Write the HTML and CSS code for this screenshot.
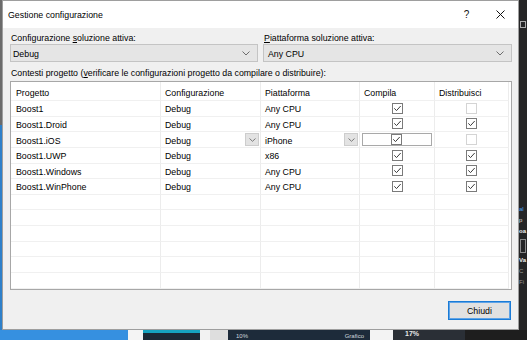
FILE: index.html
```html
<!DOCTYPE html>
<html lang="it">
<head>
<meta charset="utf-8">
<title>Gestione configurazione</title>
<link rel="stylesheet" href="styles.css">
</head>
<body>
<div class="screen">
  <div class="top">
    <div class="leftstrip"><div class="ls-grey"></div><div class="ls-blue"></div></div>
    <div class="dialog">
      <div class="titlebar">
        <span class="title">Gestione configurazione</span>
        <span class="capbtn help">?</span>
        <span class="capbtn close"><svg width="9" height="9" viewBox="0 0 9 9"><path d="M0.5 0.5 L8.5 8.5 M8.5 0.5 L0.5 8.5" stroke="#111" stroke-width="1" fill="none"/></svg></span>
      </div>
      <div class="body">
        <div class="combos">
          <div class="field">
            <div class="label">Configurazione <u>s</u>oluzione attiva:</div>
            <div class="combo"><span>Debug</span><svg class="chev" width="8" height="5" viewBox="0 0 8 5"><path d="M0.5 0.5 L4 4 L7.5 0.5" stroke="#6d6d6d" fill="none"/></svg></div>
          </div>
          <div class="field">
            <div class="label"><u>P</u>iattaforma soluzione attiva:</div>
            <div class="combo combo2"><span>Any CPU</span><svg class="chev" width="8" height="5" viewBox="0 0 8 5"><path d="M0.5 0.5 L4 4 L7.5 0.5" stroke="#6d6d6d" fill="none"/></svg></div>
          </div>
        </div>
        <div class="label label3">Contesti progetto (<u>v</u>erificare le configurazioni progetto da compilare o distribuire):</div>
        <div class="tablebox">
          <div class="grid">
            <div class="c h">Progetto</div><div class="c h">Configurazione</div><div class="c h">Piattaforma</div><div class="c h">Compila</div><div class="c h">Distribuisci</div>

            <div class="c">Boost1</div><div class="c">Debug</div><div class="c">Any CPU</div>
            <div class="c cb"><svg class="chk" width="11" height="11" viewBox="0 0 11 11"><rect x="0.5" y="0.5" width="10" height="10" fill="#fff" stroke="#7a7a7a"/><path d="M2.3 5.3 L4.5 7.6 L8.7 3" stroke="#3c3c3c" stroke-width="1" fill="none"/></svg></div>
            <div class="c cb"><svg class="chk" width="11" height="11" viewBox="0 0 11 11"><rect x="0.5" y="0.5" width="10" height="10" fill="#fff" stroke="#d4d4d4"/></svg></div>

            <div class="c">Boost1.Droid</div><div class="c">Debug</div><div class="c">Any CPU</div>
            <div class="c cb"><svg class="chk" width="11" height="11" viewBox="0 0 11 11"><rect x="0.5" y="0.5" width="10" height="10" fill="#fff" stroke="#7a7a7a"/><path d="M2.3 5.3 L4.5 7.6 L8.7 3" stroke="#3c3c3c" stroke-width="1" fill="none"/></svg></div>
            <div class="c cb"><svg class="chk" width="11" height="11" viewBox="0 0 11 11"><rect x="0.5" y="0.5" width="10" height="10" fill="#fff" stroke="#7a7a7a"/><path d="M2.3 5.3 L4.5 7.6 L8.7 3" stroke="#3c3c3c" stroke-width="1" fill="none"/></svg></div>

            <div class="c">Boost1.iOS</div>
            <div class="c sel"><span>Debug</span><span class="ddbtn"><svg width="7" height="4" viewBox="0 0 7 4"><path d="M0.5 0.5 L3.5 3.3 L6.5 0.5" stroke="#7a7a7a" fill="none"/></svg></span></div>
            <div class="c sel"><span>iPhone</span><span class="ddbtn"><svg width="7" height="4" viewBox="0 0 7 4"><path d="M0.5 0.5 L3.5 3.3 L6.5 0.5" stroke="#7a7a7a" fill="none"/></svg></span></div>
            <div class="c cb"><span class="focusbox"><svg class="chk" width="11" height="11" viewBox="0 0 11 11"><rect x="0.5" y="0.5" width="10" height="10" fill="#fff" stroke="#7a7a7a"/><path d="M2.3 5.3 L4.5 7.6 L8.7 3" stroke="#3c3c3c" stroke-width="1" fill="none"/></svg></span></div>
            <div class="c cb"><svg class="chk" width="11" height="11" viewBox="0 0 11 11"><rect x="0.5" y="0.5" width="10" height="10" fill="#fff" stroke="#d4d4d4"/></svg></div>

            <div class="c">Boost1.UWP</div><div class="c">Debug</div><div class="c">x86</div>
            <div class="c cb"><svg class="chk" width="11" height="11" viewBox="0 0 11 11"><rect x="0.5" y="0.5" width="10" height="10" fill="#fff" stroke="#7a7a7a"/><path d="M2.3 5.3 L4.5 7.6 L8.7 3" stroke="#3c3c3c" stroke-width="1" fill="none"/></svg></div>
            <div class="c cb"><svg class="chk" width="11" height="11" viewBox="0 0 11 11"><rect x="0.5" y="0.5" width="10" height="10" fill="#fff" stroke="#7a7a7a"/><path d="M2.3 5.3 L4.5 7.6 L8.7 3" stroke="#3c3c3c" stroke-width="1" fill="none"/></svg></div>

            <div class="c">Boost1.Windows</div><div class="c">Debug</div><div class="c">Any CPU</div>
            <div class="c cb"><svg class="chk" width="11" height="11" viewBox="0 0 11 11"><rect x="0.5" y="0.5" width="10" height="10" fill="#fff" stroke="#7a7a7a"/><path d="M2.3 5.3 L4.5 7.6 L8.7 3" stroke="#3c3c3c" stroke-width="1" fill="none"/></svg></div>
            <div class="c cb"><svg class="chk" width="11" height="11" viewBox="0 0 11 11"><rect x="0.5" y="0.5" width="10" height="10" fill="#fff" stroke="#7a7a7a"/><path d="M2.3 5.3 L4.5 7.6 L8.7 3" stroke="#3c3c3c" stroke-width="1" fill="none"/></svg></div>

            <div class="c">Boost1.WinPhone</div><div class="c">Debug</div><div class="c">Any CPU</div>
            <div class="c cb"><svg class="chk" width="11" height="11" viewBox="0 0 11 11"><rect x="0.5" y="0.5" width="10" height="10" fill="#fff" stroke="#7a7a7a"/><path d="M2.3 5.3 L4.5 7.6 L8.7 3" stroke="#3c3c3c" stroke-width="1" fill="none"/></svg></div>
            <div class="c cb"><svg class="chk" width="11" height="11" viewBox="0 0 11 11"><rect x="0.5" y="0.5" width="10" height="10" fill="#fff" stroke="#7a7a7a"/><path d="M2.3 5.3 L4.5 7.6 L8.7 3" stroke="#3c3c3c" stroke-width="1" fill="none"/></svg></div>

            <div class="c"></div><div class="c"></div><div class="c"></div><div class="c"></div><div class="c"></div>
            <div class="c"></div><div class="c"></div><div class="c"></div><div class="c"></div><div class="c"></div>
            <div class="c"></div><div class="c"></div><div class="c"></div><div class="c"></div><div class="c"></div>
            <div class="c"></div><div class="c"></div><div class="c"></div><div class="c"></div><div class="c"></div>
            <div class="c"></div><div class="c"></div><div class="c"></div><div class="c"></div><div class="c"></div>
            <div class="c"></div><div class="c"></div><div class="c"></div><div class="c"></div><div class="c"></div>
          </div>
        </div>
        <div class="footer">
          <button class="btn" type="button">Chiudi</button>
        </div>
      </div>
    </div>
    <div class="rightstrip">
      <div class="rs-icon"></div>
      <div class="rs-t blue">al</div>
      <div class="rs-t">p</div>
      <div class="rs-t bold">oa</div>
      <div class="rs-box"></div>
      <div class="rs-t bold">Va</div>
      <div class="rs-t grey">C</div>
      <div class="rs-t grey">Fi</div>
    </div>
  </div>
  <div class="bottom">
    <div class="seg s1"></div>
    <div class="seg s2"></div>
    <div class="seg s3"></div>
    <div class="seg s4"></div>
    <div class="seg s5"></div>
    <div class="seg s6"><span>10%</span><span>Grafico</span></div>
    <div class="seg s7"></div>
    <div class="seg s8"><span>17%</span></div>
    <div class="seg s9"></div>
  </div>
</div>
</body>
</html>
```

FILE: styles.css
```css
* { box-sizing: border-box; }
html, body { margin: 0; padding: 0; }
body {
  width: 527px;
  height: 340px;
  overflow: hidden;
  background: #1e1e1e;
  font-family: "Liberation Sans", Arial, sans-serif;
  font-size: 8.8px;
  color: #000;
}
.screen { display: flex; flex-direction: column; width: 527px; height: 340px; }
.top { display: flex; height: 330px; }
.leftstrip { width: 2px; display: flex; flex-direction: column; }
.ls-grey { height: 125px; background: #6b6b6b; }
.ls-blue { flex: 1; background: #2f80c9; }

.dialog {
  width: 517px;
  height: 330px;
  border: 1px solid #9e9e9e;
  background: #f0f0f0;
  display: flex;
  flex-direction: column;
}
.titlebar {
  height: 27px;
  background: #fff;
  display: flex;
  align-items: center;
  padding-left: 5px;
}
.title { flex: 1; font-size: 8.8px; padding-top: 1px; }
.capbtn {
  width: 33px;
  height: 27px;
  display: flex;
  align-items: center;
  justify-content: center;
}
.help { font-size: 10px; color: #111; }
.close { width: 35px; }

.body { flex: 1; padding: 4px 6px 0 7px; display: flex; flex-direction: column; }
.combos { display: grid; grid-template-columns: 248px 249px; column-gap: 5px; }
.label { height: 12px; line-height: 13px; padding-left: 1px; white-space: nowrap; }
.label u { text-decoration-thickness: 1px; text-underline-offset: 1px; }
.combo {
  height: 18px;
  background: #e5e5e5;
  border: 1px solid #c4c4c4;
  display: flex;
  align-items: center;
  padding: 1px 7px 0 2px;
  justify-content: space-between;
}
.combo2 { padding-left: 4px; }
.label3 { margin-top: 5px; }

.tablebox {
  margin-top: 2px;
  width: 502px;
  border: 1px solid #a7a7a7;
  background: #fff;
  padding-right: 2px;
}
.grid {
  display: grid;
  grid-template-columns: 150px 100px 99px 75px 74px;
  grid-template-rows: 19px;
  grid-auto-rows: 15.64px;
}
.c {
  border-right: 1px solid #ececec;
  border-bottom: 1px solid #f0f0f0;
  display: flex;
  align-items: center;
  padding-left: 4px;
  padding-top: 2px;
  white-space: nowrap;
  overflow: hidden;
}
.grid .c:nth-child(5n+1) { padding-left: 5px; }
.h { padding-top: 4px; }
.cb { justify-content: center; padding-left: 0; padding-top: 0; }
.cb .chk { display: block; }
.sel { justify-content: space-between; padding-right: 1px; }
.ddbtn {
  width: 14px;
  height: 13px;
  margin-top: -2px;
  background: #e3e3e3;
  border: 1px solid #cdcdcd;
  display: flex;
  align-items: center;
  justify-content: center;
}
.focusbox {
  width: 70px;
  height: 13px;
  margin-left: -1px;
  border: 1px solid #a9a9a9;
  display: flex;
  align-items: center;
  justify-content: center;
  background: #fff;
}

.footer { display: flex; justify-content: flex-end; margin-top: 11px; padding-right: 1px; }
.btn {
  width: 63px;
  height: 19px;
  border: 1px solid #1a7bd6;
  box-shadow: inset 0 0 0 1px #5fa3e6;
  background: #e1e1e1;
  font-family: "Liberation Sans", Arial, sans-serif;
  font-size: 8.8px;
  color: #000;
  padding: 1px 0 0;
}

.rightstrip { flex: 1; background: #252526; overflow: hidden; display: flex; flex-direction: column; color: #ddd; font-size: 6px; }
.rs-icon { width: 6px; height: 7px; border: 1px solid #aaa; margin: 21px 0 0 1px; }
.rs-t { height: 11px; line-height: 11px; white-space: nowrap; padding-left: 0; }
.rs-t.blue { margin-top: 176px; color: #4aa3f0; }
.rs-t.bold { font-weight: bold; color: #eee; }
.rs-t.grey { color: #999; }
.rs-box { width: 6px; height: 14px; border: 1px solid #8a8a8a; margin: 2px 0 2px 1px; }

.bottom { display: flex; height: 10px; }
.seg { height: 10px; }
.s1 { width: 128px; background: #3690e0; }
.s2 { width: 15px; background: #f4f4f4; }
.s3 { width: 57px; background: linear-gradient(#16a3bf 0 3px, #1c2a36 3px); }
.s4 { width: 10px; background: #f2f2f2; }
.s5 { width: 18px; background: #dedede; }
.s6 { width: 142px; background: #1d2b3a; color: #cfd6dd; font-size: 6px; display: flex; justify-content: space-between; padding: 2px 6px 0 8px; line-height: 8px; }
.s7 { width: 23px; background: #f3f3f3; }
.s8 { width: 72px; background: #2a2f36; color: #e8e8e8; font-size: 7px; font-weight: bold; padding: 0 0 0 12px; line-height: 7px; }
.s9 { flex: 1; background: #1e1e1e; }
```
